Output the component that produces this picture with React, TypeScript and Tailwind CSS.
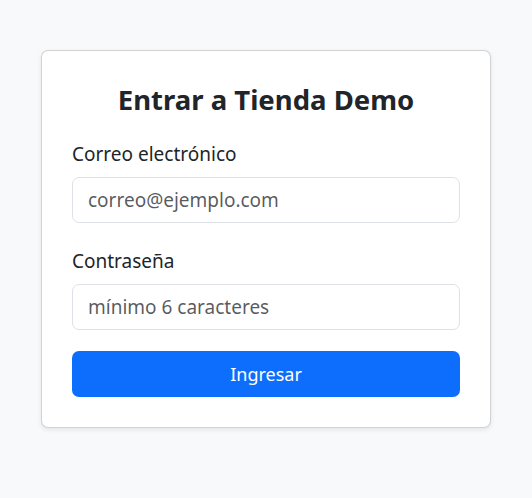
import React from "react";

export default function App() {
  return (
    <div
      className="min-h-[498px] w-full bg-[#f8f9fa] pt-[50px] text-[#212529]"
      style={{ fontFamily: '"Noto Sans", "Open Sans", sans-serif' }}
    >
      <div className="mx-auto w-[450px] rounded-[7px] border border-[rgba(0,0,0,0.175)] bg-white px-[30px] pb-[30px] pt-[29px] shadow-[0_2px_5px_rgba(0,0,0,0.08)]">
        <h3 className="mb-[20px] text-center text-[27.5px] font-bold leading-[40px]">
          Entrar a Tienda Demo
        </h3>
        <form className="flex flex-col" onSubmit={(e) => e.preventDefault()}>
          <label className="mb-[8px] text-[19px] leading-[29px]">Correo electrónico</label>
          <input
            type="email"
            placeholder="correo@ejemplo.com"
            className="h-[46px] w-full rounded-[7px] border border-[#dee2e6] bg-white px-[15px] text-[19px] outline-none placeholder:text-[rgba(33,37,41,0.75)]"
          />
          <label className="mb-[8px] mt-[24px] text-[19px] leading-[29px]">Contraseña</label>
          <input
            type="password"
            placeholder="mínimo 6 caracteres"
            className="h-[46px] w-full rounded-[7px] border border-[#dee2e6] bg-white px-[15px] text-[19px] outline-none placeholder:text-[rgba(33,37,41,0.75)]"
          />
          <button
            type="submit"
            className="mt-[21px] h-[46px] w-full rounded-[7px] bg-[#0d6efd] text-[18px] text-white"
          >
            Ingresar
          </button>
        </form>
      </div>
    </div>
  );
}
